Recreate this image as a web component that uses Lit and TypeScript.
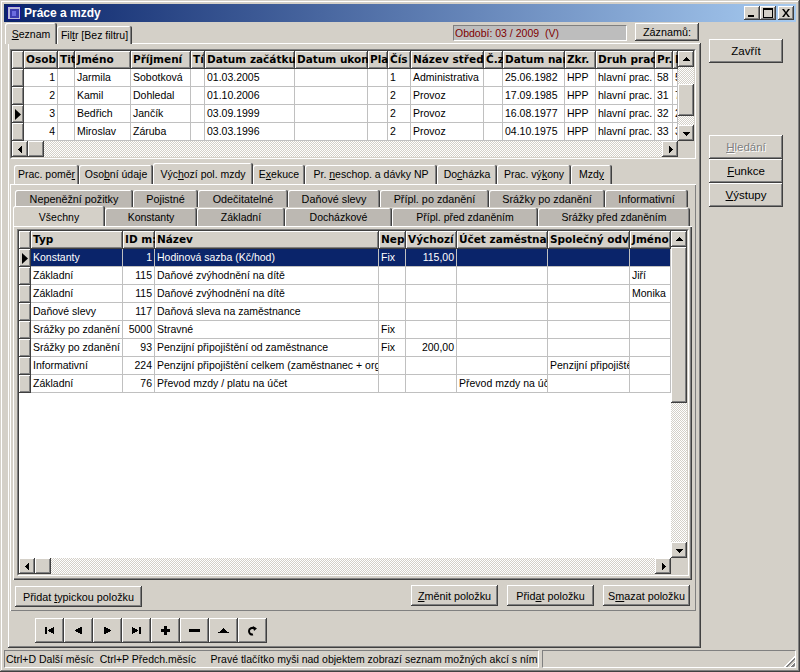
import { LitElement, html, css, svg } from "lit";
import { customElement } from "lit/decorators.js";

type Row = string[];
const g1Cols = [34, 17, 56, 60, 14, 90, 73, 20, 23, 73, 19, 62, 31, 59, 18, 5];
const g1Head = ["Osob", "Tit", "Jméno", "Příjmení", "Tí", "Datum začátku", "Datum ukon", "Pla", "Čís", "Název střed", "Č.z", "Datum nar", "Zkr.", "Druh prac", "Pr.", "I"];
const g1Right = [0];
const g1Rows: Row[] = [
  ["1", "", "Jarmila", "Sobotková", "", "01.03.2005", "", "", "1", "Administrativa", "", "25.06.1982", "HPP", "hlavní prac.", "58", "5"],
  ["2", "", "Kamil", "Dohledal", "", "01.10.2006", "", "", "2", "Provoz", "", "17.09.1985", "HPP", "hlavní prac.", "31", "7"],
  ["3", "", "Bedřich", "Jančík", "", "03.09.1999", "", "", "2", "Provoz", "", "16.08.1977", "HPP", "hlavní prac.", "32", "2"],
  ["4", "", "Miroslav", "Záruba", "", "03.03.1996", "", "", "2", "Provoz", "", "04.10.1975", "HPP", "hlavní prac.", "33", "3"],
];
const g2Cols = [92, 32, 224, 27, 51, 91, 82, 41];
const g2Head = ["Typ", "ID m:", "Název", "Nep", "Výchozí", "Účet zaměstnan", "Společný odv", "Jméno"];
const g2Right = [1, 4];
const g2Rows: Row[] = [
  ["Konstanty", "1", "Hodinová sazba (Kč/hod)", "Fix", "115,00", "", "", ""],
  ["Základní", "115", "Daňové zvýhodnění na dítě", "", "", "", "", "Jiří"],
  ["Základní", "115", "Daňové zvýhodnění na dítě", "", "", "", "", "Monika"],
  ["Daňové slevy", "117", "Daňová sleva na zaměstnance", "", "", "", "", ""],
  ["Srážky po zdanění", "5000", "Stravné", "Fix", "", "", "", ""],
  ["Srážky po zdanění", "93", "Penzijní připojištění od zaměstnance", "Fix", "200,00", "", "", ""],
  ["Informativní", "224", "Penzijní připojištění celkem (zaměstnanec + organizace)", "", "", "", "Penzijní připojištění", ""],
  ["Základní", "76", "Převod mzdy / platu na účet", "", "", "Převod mzdy na účet", "", ""],
];

const arrow = (d: string) => html`<svg class="glyph" width="9" height="9" viewBox="0 0 9 9"><path d=${d} fill="#000"/></svg>`;
const UP = "M4 2h1v1h1v1h1v1h1v1H1V5h1V4h1V3h1z";
const DOWN = "M1 3h7v1H7v1H6v1H5v1H4V6H3V5H2V4H1z";
const LEFT = "M5 1h1v7H5V7H4V6H3V5H2V4h1V3h1V2h1z";
const RIGHT = "M3 1h1v1h1v1h1v1h1v1H6v1H5v1H4v1H3z";

const navIcons = [
  svg`<path d="M1 1h2v7H1zM4 4h1V3h2V2h2V1h1v7H9V7H7V6H5V5H4z"/>`,
  svg`<path d="M2 4h1V3h2V2h2V1h2v7H7V7H5V6H3V5H2z"/>`,
  svg`<path d="M2 1h2v1h2v1h2v1h1v1H8v1H6v1H4v1H2z"/>`,
  svg`<path d="M1 1h1v1h2v1h2v1h1v1H6v1H4v1H2v1H1zM8 1h2v7H8z"/>`,
  svg`<path d="M4 0h3v3h3v3H7v3H4V6H1V3h3z"/>`,
  svg`<path d="M0 3h11v3H0z"/>`,
  svg`<path d="M5 2h1v1h1v1h1v1h1v1h2v1H0V6h2V5h1V4h1V3h1z"/>`,
  svg`<path d="M8 2.500C5 1 2 2.500 2 5c0 2.500 2 4 4 3.500" fill="none" stroke="#000" stroke-width="2"/><path d="M6 0l4 2.500-3 2.500z"/>`,
];

@customElement("app-root")
export class AppRoot extends LitElement {
  static styles = css`
    :host { display: block; width: 800px; height: 672px; background: #d4d0c8; overflow: hidden;
      font: 10.8px "Liberation Sans", Arial, sans-serif; color: #000; }
    * { box-sizing: border-box; }
    u { text-underline-offset: 1px; }
    .window { width: 800px; height: 672px; padding: 4px; display: flex; flex-direction: column;
      box-shadow: inset -1px -1px #404040, inset 1px 1px #d4d0c8, inset -2px -2px #808080, inset 2px 2px #fff; }
    .title { height: 18px; flex: none; display: flex; align-items: center; padding: 0 2px 0 3px;
      background: linear-gradient(90deg, #0a246a, #a6caf0); color: #fff; font: bold 12px "Liberation Sans", sans-serif; }
    .title .ico { width: 14px; height: 14px; margin-right: 3px; flex: none; }
    .title .name { flex: 1; }
    .wbtn { width: 16px; height: 14px; background: #d4d0c8; display: flex; align-items: center; justify-content: center;
      box-shadow: inset -1px -1px #404040, inset 1px 1px #fff, inset -2px -2px #808080; }
    .wbtn.last { margin-left: 2px; }
    .client { height: 628px; flex: none; display: flex; }
    .main { width: 697px; flex: none; display: flex; flex-direction: column; }
    .top { height: 21px; margin-top: 1px; flex: none; display: flex; align-items: flex-start; padding-left: 1px; position: relative; z-index: 2; }
    .page { width: 693px; height: 605px; margin: -1px 0 0 4px; flex: none; padding: 6px 0 0 2px;
      box-shadow: inset -1px -1px #404040, inset 1px 1px #fff, inset -2px -2px #808080; }

    .tab { height: 18px; background: #d4d0c8; display: flex; align-items: center; justify-content: center; white-space: nowrap; flex: none;
      margin-top: 3px; border-radius: 2px 2px 0 0; padding-bottom: 1px; font-size: 10.5px;
      box-shadow: inset -1px 0 #404040, inset 1px 1px #fff, inset -2px 0 #808080; }
    .tab.on { height: 21px; margin-top: 0; position: relative; z-index: 2; padding-top: 2px; }
    .period { width: 174px; height: 16px; margin: 2px 0 0 321px; background: #bdbdbd; color: #800000; padding-left: 1px; line-height: 14px; white-space: pre;
      border: 1px solid; border-color: #808080 #fff #fff #808080; font-size: 10.5px; }
    .btn { background: #d4d0c8; display: flex; align-items: center; justify-content: center; flex: none; white-space: nowrap;
      box-shadow: inset -1px -1px #404040, inset 1px 1px #fff, inset -2px -2px #808080; }
    .rec { width: 64px; height: 18px; margin-left: 8px; }

    .frame { border: 1px solid; border-color: #808080 #fff #fff #808080; }
    .frame-in { width: 100%; height: 100%; border: 1px solid; border-color: #404040 #d4d0c8 #d4d0c8 #404040; display: grid; background: #fff; overflow: hidden; }
    .g1 { width: 686px; height: 110px; }
    .g1 .frame-in { grid-template-columns: 666px 16px; grid-template-rows: 90px 16px; }
    .g2 { width: 672px; height: 347px; }
    .g2 .frame-in { grid-template-columns: 652px 16px; grid-template-rows: 327px 16px; }
    .sheet { display: grid; grid-auto-rows: 18px; align-content: start; overflow: hidden; background: #fff; }
    .c { overflow: hidden; white-space: nowrap; border-right: 1px solid #c0c0c0; border-bottom: 1px solid #c0c0c0; padding: 0 1px 0 2px; line-height: 17px; background: #fff; font-size: 10.5px; }
    .c.r { text-align: right; padding: 0 2px 0 0; }
    .c.sel { background: #0a246a; color: #fff; }
    .h { background: #d4d0c8; font: bold 10.5px "DejaVu Sans", sans-serif; line-height: 17px; border: 0; padding: 0 0 0 2px; overflow: hidden; white-space: nowrap;
      box-shadow: inset -1px -1px #404040, inset 1px 1px #fff, inset -2px -2px #808080; }
    .i { background: #d4d0c8; display: flex; align-items: center; justify-content: center;
      box-shadow: inset -1px -1px #404040, inset 1px 1px #fff, inset -2px -2px #808080; }
    .sb { background: repeating-conic-gradient(#fff 0 25%, #d4d0c8 0 50%) 0 0 / 2px 2px; display: flex; min-width: 0; min-height: 0; }
    .sb.v { flex-direction: column; }
    .sb .grow { flex: 1; }
    .sb .b { flex: none; width: 16px; height: 16px; background: #d4d0c8; display: flex; align-items: center; justify-content: center;
      box-shadow: inset -1px -1px #404040, inset 1px 1px #fff, inset -2px -2px #808080; }
    .sb .gap { height: 17px; flex: none; }
    .sb .thumb1 { height: 32px; }
    .sb .thumb2 { height: 156px; }
    .sb.solid { background: #d4d0c8; }
    .sb.solid .grow { background: repeating-conic-gradient(#fff 0 25%, #d4d0c8 0 50%) 0 0 / 2px 2px; }
    .corner { background: #d4d0c8; }
    .glyph { display: block; }

    .tabs2 { height: 21px; margin-top: 4px; display: flex; padding-left: 4px; position: relative; z-index: 2; }
    .tabs2 .tab { margin-top: 2px; height: 19px; }
    .tabs2 .tab.on { margin-top: 0; height: 21px; }
    .panel2 { width: 686px; height: 427px; padding: 6px 0 0 3px; box-shadow: inset 1px 1px #fff, inset -1px -1px #808080; }
    .itabs1 { height: 17px; display: flex; padding-left: 2px; }
    .itabs1 .tab { background: #bcb8b2; margin: 0; height: 17px; padding-bottom: 0; font-size: 10.8px; }
    .itabs2 { height: 20px; margin-top: -1px; display: flex; position: relative; z-index: 2; }
    .itabs2 .tab { background: #bcb8b2; margin-top: 2px; height: 18px; padding-bottom: 0; }
    .itabs2 .tab.on { background: #d4d0c8; margin-top: 0; height: 20px; padding-top: 1px; }
    .panel3 { width: 679px; height: 354px; padding: 3px 0 0 4px; box-shadow: inset 1px 1px #fff, inset -1px -1px #404040, inset -2px -2px #808080; }
    .actions { width: 675px; margin: 5px 0 0 2px; display: flex; justify-content: flex-end; gap: 9px; height: 22px; }
    .actions .b1 { width: 127px; height: 21px; margin: 1px auto 0 0; }
    .actions .b2 { width: 87px; height: 21px; }
    .nav { display: flex; margin: 7px 0 0 25px; }
    .nav .btn { width: 29px; height: 25px; }
    .side { flex: 1; padding: 17px 0 0 8px; }
    .side .btn { width: 74px; height: 24px; font-size: 11.5px; }
    .side .zav { margin-bottom: 72px; }
    .dis { color: #808080; text-shadow: 1px 1px #fff; }
    .status { height: 18px; flex: none; display: flex; gap: 3px; }
    .pane { border: 1px solid; border-color: #808080 #fff #fff #808080; line-height: 16px; white-space: pre; overflow: hidden; font-size: 10.5px; }
    .p1 { width: 535px; padding-left: 1px; }
    .p2 { flex: 1; position: relative; }
    .grip { position: absolute; right: 0; bottom: 0; width: 12px; height: 12px;
      background: repeating-linear-gradient(135deg, transparent 0 1px, #fff 1px 2px, #808080 2px 4px); clip-path: polygon(100% 0, 100% 100%, 0 100%); }
  `;

  private indicator(on: boolean) {
    return html`<div class="i">${on ? html`<svg class="glyph" width="7" height="11" viewBox="0 0 7 11"><path d="M0 0l6 5.5L0 11z" fill="#000"/></svg>` : ""}</div>`;
  }

  private sheet(cols: number[], head: string[], rows: Row[], right: number[], active: number, selected: number) {
    const tmpl = `12px ${cols.map((c) => c + "px").join(" ")}`;
    return html`<div class="sheet" style="grid-template-columns:${tmpl}">
      ${this.indicator(false)}
      ${head.map((h) => html`<div class="h">${h}</div>`)}
      ${rows.map((r, i) => html`${this.indicator(i === active)}${r.map(
        (v, j) => html`<div class="c ${right.includes(j) ? "r" : ""} ${i === selected ? "sel" : ""}">${v}</div>`
      )}`)}
    </div>`;
  }

  private tabs(items: [unknown, number][], activeIdx = -1) {
    return items.map(([t, w], i) => html`<div class="tab ${i === activeIdx ? "on" : ""}" style="width:${w}px">${t}</div>`);
  }

  render() {
    return html`<div class="window">
      <div class="title">
        <svg class="ico" viewBox="0 0 14 14"><rect width="14" height="14" fill="#14148c"/><rect x="1" y="1" width="12" height="12" fill="#b8b8d8"/><rect x="3" y="3" width="9" height="9" fill="#3c3cb0"/><rect x="5" y="5" width="4" height="5" fill="#6c6ce0"/></svg>
        <span class="name">Práce a mzdy</span>
        <div class="wbtn"><svg width="10" height="10" viewBox="0 0 10 10"><path d="M1 7h6v2H1z"/></svg></div>
        <div class="wbtn"><svg width="10" height="10" viewBox="0 0 10 10"><path d="M0 0h10v10H0zM1 2v7h8V2z"/></svg></div>
        <div class="wbtn last"><svg width="10" height="10" viewBox="0 0 10 10"><path d="M1 1h2l2 3 2-3h2L6 5l3 4H7L5 6 3 9H1l3-4z"/></svg></div>
      </div>
      <div class="client">
        <div class="main">
          <div class="top">
            ${this.tabs([
              [html`<u>S</u>eznam`, 52],
              [html`Fil<u>t</u>r [Bez filtru]`, 75],
            ], 0)}
            <div class="period">Období: 03 / 2009  (V)</div>
            <div class="btn rec">Záznamů:</div>
          </div>
          <div class="page">
            <div class="frame g1"><div class="frame-in">
              ${this.sheet(g1Cols, g1Head, g1Rows, g1Right, 2, -1)}
              <div class="sb v"><div class="b">${arrow(UP)}</div><div class="gap"></div><div class="b thumb1"></div><div class="grow"></div><div class="b">${arrow(DOWN)}</div></div>
              <div class="sb"><div class="b">${arrow(LEFT)}</div><div class="b"></div><div class="grow"></div><div class="b">${arrow(RIGHT)}</div></div>
              <div class="corner"></div>
            </div></div>
            <div class="tabs2">
              ${this.tabs([
                [html`Prac. pomě<u>r</u>`, 65],
                [html`Oso<u>b</u>ní údaje`, 74],
                [html`Výc<u>h</u>ozí pol. mzdy`, 100],
                [html`E<u>x</u>ekuce`, 52],
                [html`Pr.&nbsp;<u>n</u>eschop. a dávky NP`, 132],
                [html`Do<u>c</u>házka`, 60],
                [html`Prac. vý<u>k</u>ony`, 74],
                [html`Mzd<u>y</u>`, 41],
              ], 2)}
            </div>
            <div class="panel2">
              <div class="itabs1">
                ${this.tabs([["Nepeněžní požitky", 118], ["Pojistné", 65], ["Odečitatelné", 90], ["Daňové slevy", 92], ["Přípl. po zdanění", 109], ["Srážky po zdanění", 116], ["Informativní", 83]])}
              </div>
              <div class="itabs2">
                ${this.tabs([["Všechny", 92], ["Konstanty", 92], ["Základní", 88], ["Docházkové", 107], ["Přípl. před zdaněním", 146], ["Srážky před zdaněním", 152]], 0)}
              </div>
              <div class="panel3">
                <div class="frame g2"><div class="frame-in">
                  ${this.sheet(g2Cols, g2Head, g2Rows, g2Right, 0, 0)}
                  <div class="sb v solid"><div class="b">${arrow(UP)}</div><div class="b thumb2"></div><div class="grow"></div><div class="b">${arrow(DOWN)}</div></div>
                  <div class="sb"><div class="b">${arrow(LEFT)}</div><div class="b"></div><div class="grow"></div><div class="b">${arrow(RIGHT)}</div></div>
                  <div class="corner"></div>
                </div></div>
              </div>
              <div class="actions">
                <div class="btn b1"><span>Přidat <u>t</u>ypickou položku</span></div>
                <div class="btn b2"><span><u>Z</u>měnit položku</span></div>
                <div class="btn b2"><span>Přid<u>a</u>t položku</span></div>
                <div class="btn b2"><span>S<u>m</u>azat položku</span></div>
              </div>
            </div>
            <div class="nav">
              ${navIcons.map((p) => html`<div class="btn"><svg width="11" height="11" viewBox="0 -1 11 11" fill="#000">${p}</svg></div>`)}
            </div>
          </div>
        </div>
        <div class="side">
          <div class="btn zav">Zavřít</div>
          <div class="btn dis"><span><u>H</u>ledání</span></div>
          <div class="btn"><span><u>F</u>unkce</span></div>
          <div class="btn"><span><u>V</u>ýstupy</span></div>
        </div>
      </div>
      <div class="status">
        <div class="pane p1">Ctrl+D Další měsíc  Ctrl+P Předch.měsíc     Pravé tlačítko myši nad objektem zobrazí seznam možných akcí s ním</div>
        <div class="pane p2"><div class="grip"></div></div>
      </div>
    </div>`;
  }
}
